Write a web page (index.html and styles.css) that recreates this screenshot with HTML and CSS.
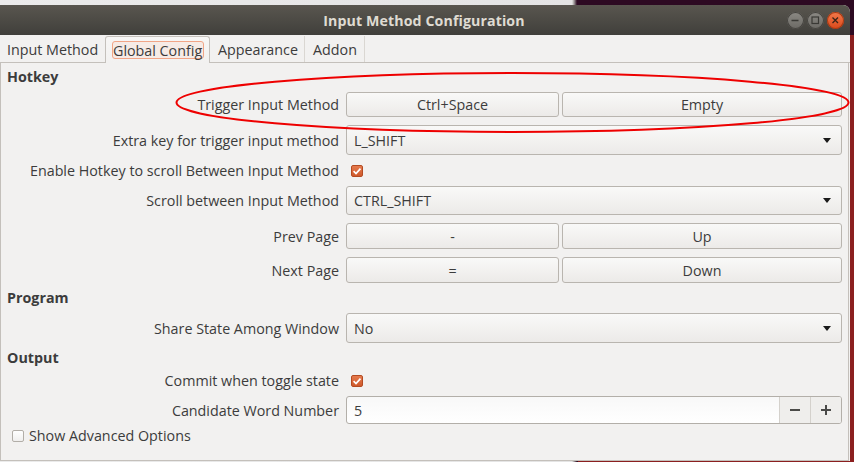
FILE: index.html
```html
<!DOCTYPE html>
<html lang="en">
<head>
<meta charset="utf-8">
<title>Input Method Configuration</title>
<link rel="stylesheet" href="styles.css">
</head>
<body>
<div class="desktop">
  <div class="window">
    <header class="titlebar">
      <span></span>
      <span class="title">Input Method Configuration</span>
      <div class="wcontrols">
        <span class="wbtn"><svg viewBox="0 0 17 17" width="17" height="17"><line x1="4.5" y1="8.5" x2="11.5" y2="8.5" stroke="#3a3935" stroke-width="1.4"/></svg></span>
        <span class="wbtn"><svg viewBox="0 0 17 17" width="17" height="17"><rect x="5" y="5" width="6.5" height="6.5" fill="none" stroke="#3a3935" stroke-width="1.2"/></svg></span>
        <span class="wbtn close"><svg viewBox="0 0 17 17" width="17" height="17"><path d="M5.5 5.5 L11 11 M11 5.5 L5.5 11" stroke="#3a2418" stroke-width="1.3"/></svg></span>
      </div>
    </header>
    <div class="content">
      <nav class="tabs">
        <div class="tab t1">Input Method</div>
        <div class="tab t2 active"><span class="focus">Global Config</span></div>
        <div class="tab t3">Appearance</div>
        <div class="tab t4">Addon</div>
      </nav>
      <section class="pane">
        <div class="form">
          <div class="section-title">Hotkey</div>
          <div class="row h25">
            <span class="label">Trigger Input Method</span>
            <div class="pair"><span class="btn first">Ctrl+Space</span><span class="btn second">Empty</span></div>
          </div>
          <div class="row h30">
            <span class="label">Extra key for trigger input method</span>
            <div class="combo"><span>L_SHIFT</span><span class="arrow"></span></div>
          </div>
          <div class="row h15">
            <span class="label">Enable Hotkey to scroll Between Input Method</span>
            <div><span class="check on"><svg viewBox="0 0 12 12" width="12" height="12"><path d="M2.6 6.2 L5 8.5 L9.5 3.6" fill="none" stroke="#fff" stroke-width="1.7"/></svg></span></div>
          </div>
          <div class="row h29">
            <span class="label">Scroll between Input Method</span>
            <div class="combo"><span>CTRL_SHIFT</span><span class="arrow"></span></div>
          </div>
          <div class="row h26">
            <span class="label">Prev Page</span>
            <div class="pair"><span class="btn first">-</span><span class="btn second">Up</span></div>
          </div>
          <div class="row h26">
            <span class="label">Next Page</span>
            <div class="pair"><span class="btn first">=</span><span class="btn second">Down</span></div>
          </div>
          <div class="section-title">Program</div>
          <div class="row h30">
            <span class="label">Share State Among Window</span>
            <div class="combo"><span>No</span><span class="arrow"></span></div>
          </div>
          <div class="section-title">Output</div>
          <div class="row h15">
            <span class="label">Commit when toggle state</span>
            <div><span class="check on"><svg viewBox="0 0 12 12" width="12" height="12"><path d="M2.6 6.2 L5 8.5 L9.5 3.6" fill="none" stroke="#fff" stroke-width="1.7"/></svg></span></div>
          </div>
          <div class="row h28">
            <span class="label">Candidate Word Number</span>
            <div class="spin"><span class="spin-value">5</span><span class="spin-btn"><svg viewBox="0 0 12 12" width="12" height="12"><rect x="1" y="5" width="10" height="2" fill="#4a4a48"/></svg></span><span class="spin-btn"><svg viewBox="0 0 12 12" width="12" height="12"><rect x="1" y="5" width="10" height="2" fill="#4a4a48"/><rect x="5" y="1" width="2" height="10" fill="#4a4a48"/></svg></span></div>
          </div>
        </div>
        <div class="advanced"><span class="check"></span><span>Show Advanced Options</span></div>
      </section>
    </div>
  </div>
  <svg class="annotation" viewBox="0 0 854 462" width="854" height="462"><ellipse cx="512.5" cy="102.5" rx="336" ry="29.5" fill="none" stroke="#ee0000" stroke-width="2"/></svg>
</div>
</body>
</html>
```

FILE: styles.css
```css
body {
  margin: 0;
  font-family: "Open Sans", "Noto Sans", sans-serif;
  font-size: 14.3px;
  color: #3c3c3c;
}

.desktop {
  position: relative;
  width: 854px;
  height: 462px;
  overflow: hidden;
  box-sizing: border-box;
  padding-top: 5px;
  background:
    linear-gradient(#8b1f1f, #8b1f1f) 578px 35px / 276px 427px no-repeat,
    linear-gradient(to right, #ebebeb 0, #e4e4e4 572px, #a09c9a 574px, #2d0a22 577px);
}

.window {
  width: 850px;
  height: 456px;
  display: flex;
  flex-direction: column;
  background: #f2f1f0;
  border-top-right-radius: 7px;
  overflow: hidden;
}

.titlebar {
  height: 30px;
  flex: none;
  display: grid;
  grid-template-columns: 1fr auto 1fr;
  align-items: center;
  background: linear-gradient(#59564f, #403f3b);
}

.title {
  color: #dfdbd2;
  font-weight: bold;
  font-size: 14.2px;
  letter-spacing: 0.1px;
  margin-right: 2px;
}

.wcontrols {
  justify-self: end;
  display: flex;
  gap: 3px;
  padding-right: 6px;
}

.wbtn {
  width: 17px;
  height: 17px;
  box-sizing: border-box;
  border-radius: 50%;
  background: linear-gradient(#8b8984, #6b6964);
  box-shadow: inset 0 0 0 1px #45433f;
  display: flex;
}

.wbtn.close {
  background: linear-gradient(#f27a4c, #d9481a);
  box-shadow: inset 0 0 0 1px #a63a14;
}

.content {
  flex: 1;
  display: flex;
  flex-direction: column;
}

.tabs {
  display: flex;
  height: 26px;
  padding-top: 1px;
  border-bottom: 1px solid #c4c0bb;
  flex: none;
}

.tab {
  height: 26px;
  box-sizing: border-box;
  display: flex;
  align-items: center;
  white-space: nowrap;
}

.t1 { width: 105px; padding-left: 7px; }
.t2 { width: 105px; }
.t3 { width: 95px; padding-left: 8px; border-right: 1px solid #dad7d2; }
.t4 { width: 60px; padding-left: 8px; border-right: 1px solid #dad7d2; }

.tab.active {
  height: 27px;
  margin-bottom: -1px;
  border: 1px solid #c4c0bb;
  border-bottom: none;
  border-radius: 3px 3px 0 0;
  background: linear-gradient(#f7f6f5, #f2f1f0);
  padding-left: 6px;
  padding-bottom: 1px;
}

.focus {
  display: inline-block;
  height: 18px;
  line-height: 17px;
  box-sizing: border-box;
  padding: 0 1px 0 0;
  border: 1px solid #f1a587;
  border-radius: 3px;
  background: #f6ebe6;
}

.pane {
  flex: 1;
  margin-right: 1px;
  border: 1px solid #c4c0bb;
  border-top: none;
  padding-top: 7px;
  display: flex;
  flex-direction: column;
}

.form {
  display: flex;
  flex-direction: column;
  gap: 8px;
}

.section-title {
  height: 14px;
  line-height: 14px;
  padding-left: 6px;
  font-weight: bold;
}

.row {
  display: grid;
  grid-template-columns: 338px 496px;
  grid-template-rows: 100%;
  column-gap: 7px;
  align-items: center;
}

.h15 { height: 15px; }
.h25 { height: 25px; }
.h26 { height: 26px; }
.h28 { height: 28px; }
.h29 { height: 29px; }
.h30 { height: 30px; }

.label {
  text-align: right;
  white-space: nowrap;
}

.row > div { height: 100%; display: flex; align-items: center; }

.pair { gap: 3px; }

.btn, .combo {
  height: 100%;
  box-sizing: border-box;
  border: 1px solid #b9b5af;
  border-radius: 3px;
  background: linear-gradient(#f9f9f8, #eceae8);
  display: flex;
  align-items: center;
}

.btn { justify-content: center; }
.btn.first { width: 213px; flex: none; }
.btn.second { flex: 1; }

.combo {
  width: 100%;
  justify-content: space-between;
  padding: 0 10px 0 7px;
}

.arrow {
  width: 0;
  height: 0;
  border-left: 4.5px solid transparent;
  border-right: 4.5px solid transparent;
  border-top: 5px solid #1a1a1a;
}

.check {
  width: 12px;
  height: 12px;
  box-sizing: border-box;
  border-radius: 2px;
  border: 1px solid #b2aea8;
  background: linear-gradient(#ffffff, #f0efee);
  display: inline-flex;
}

.check.on {
  margin-left: 5px;
  border-color: #b44b22;
  background: linear-gradient(#e57a4d, #cf5a2c);
}

.check.on svg { margin: -1px; }

.spin {
  width: 100%;
  box-sizing: border-box;
  border: 1px solid #b3afa9;
  border-radius: 3px;
  background: linear-gradient(#f8f8f8, #ffffff);
  display: flex;
  overflow: hidden;
}

.spin-value {
  flex: 1;
  padding-left: 7px;
  display: flex;
  align-items: center;
}

.spin-btn {
  width: 30px;
  height: 100%;
  border-left: 1px solid #d4d1cc;
  background: #efeeec;
  display: flex;
  align-items: center;
  justify-content: center;
}

.advanced {
  margin-top: 4px;
  height: 15px;
  padding-left: 11px;
  display: flex;
  align-items: center;
  gap: 5px;
}

.annotation {
  position: absolute;
  top: 0;
  left: 0;
  pointer-events: none;
}
```
